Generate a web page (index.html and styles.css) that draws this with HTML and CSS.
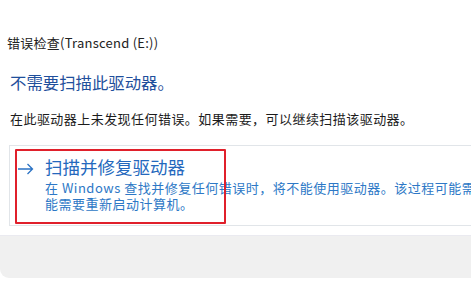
FILE: index.html
```html
<!DOCTYPE html>
<html lang="zh-CN">
<head>
    <meta charset="UTF-8">
    <title>错误检查</title>
    <link rel="stylesheet" href="styles.css">
</head>
<body>
<div class="dialog">
    <div class="dialog-main">
        <div class="dialog-title">错误检查(Transcend (E:))</div>
        <h1 class="heading">不需要扫描此驱动器。</h1>
        <p class="message">在此驱动器上未发现任何错误。如果需要，可以继续扫描该驱动器。</p>
        <div class="command-card">
            <div class="command">
                <svg class="arrow" width="17" height="12" viewBox="0 0 17 12">
                    <path d="M1 6H15.5M10.5 1L15.5 6L10.5 11" fill="none" stroke="#2a72c4" stroke-width="1.3"/>
                </svg>
                <div class="command-text">
                    <div class="command-title">扫描并修复驱动器</div>
                    <div class="command-desc">在 Windows 查找并修复任何错误时，将不能使用驱动器。该过程可能需要一些时间，并可<br>能需要重新启动计算机。</div>
                </div>
            </div>
            <div class="highlight"></div>
        </div>
    </div>
    <div class="dialog-footer"></div>
</div>
</body>
</html>
```

FILE: styles.css
```css
body {
    margin: 0;
    background: #ffffff;
    overflow: hidden;
    font-family: "Noto Sans CJK SC", "Noto Sans", sans-serif;
    color: #1b1b1b;
}

.dialog {
    width: 640px;
}

.dialog-main {
    padding: 33px 0 9px 0;
}

.dialog-title {
    font-size: 13px;
    line-height: 20px;
    letter-spacing: 0.25px;
    padding-left: 7px;
    color: #222;
}

.heading {
    margin: 17px 0 0 10px;
    font-size: 16.4px;
    line-height: 24px;
    font-weight: normal;
    color: #1f4f9c;
}

.message {
    margin: 15px 0 0 10px;
    font-size: 13px;
    line-height: 20px;
    letter-spacing: 0.45px;
}

.command-card {
    position: relative;
    margin: 16px 0 0 9px;
    border: 1px solid #e1e5e9;
    border-right: none;
    height: 79px;
}

.command {
    display: flex;
    align-items: flex-start;
    padding: 10px 0 0 7px;
}

.arrow {
    margin-top: 7px;
    flex-shrink: 0;
}

.command-text {
    margin-left: 11px;
    color: #2d78c6;
}

.command-title {
    font-size: 17.5px;
    line-height: 22px;
    color: #2468bd;
}

.command-desc {
    margin-top: 2px;
    font-size: 13px;
    line-height: 16px;
    letter-spacing: 0.5px;
    white-space: nowrap;
}

.highlight {
    position: absolute;
    left: 5px;
    top: 3px;
    width: 207px;
    height: 71px;
    border: 2px solid #e0202b;
    border-radius: 1px;
}

.dialog-footer {
    height: 42px;
    background: #f0f0f0;
    border-top: 1px solid #eaeaf0;
    border-bottom-left-radius: 9px;
}
```
